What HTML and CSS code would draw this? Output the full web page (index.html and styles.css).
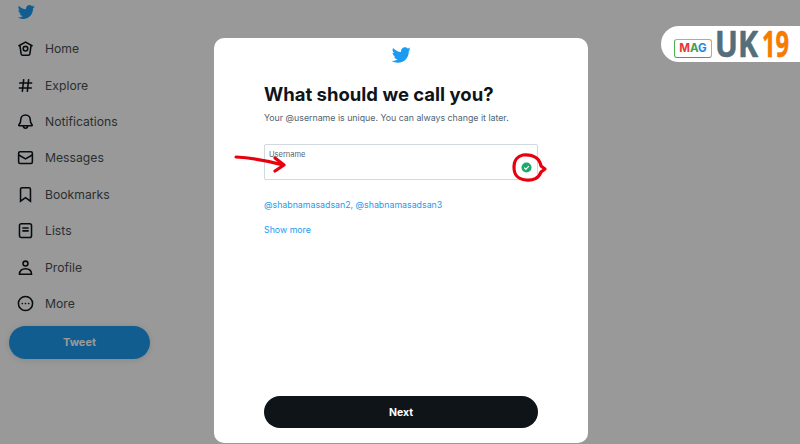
FILE: index.html
```html
<!DOCTYPE html>
<html lang="en">
<head>
    <meta charset="UTF-8">
    <title>What should we call you?</title>
    <link rel="stylesheet" href="styles.css">
</head>
<body>
<aside class="sidebar">
    <svg class="side-logo" viewBox="0 0 24 24"><path d="M23.643 4.937c-.835.37-1.732.62-2.675.733.962-.576 1.7-1.49 2.048-2.578-.9.534-1.897.922-2.958 1.13-.85-.904-2.06-1.47-3.4-1.47-2.572 0-4.658 2.086-4.658 4.66 0 .364.042.718.12 1.06-3.873-.195-7.304-2.05-9.602-4.868-.4.69-.63 1.49-.63 2.342 0 1.616.823 3.043 2.072 3.878-.764-.025-1.482-.234-2.11-.583v.06c0 2.257 1.605 4.14 3.737 4.568-.392.106-.803.162-1.227.162-.3 0-.593-.028-.877-.082.593 1.85 2.313 3.198 4.352 3.234-1.595 1.25-3.604 1.995-5.786 1.995-.376 0-.747-.022-1.112-.065 2.062 1.323 4.51 2.093 7.14 2.093 8.57 0 13.255-7.098 13.255-13.254 0-.2-.005-.402-.014-.602.91-.658 1.7-1.477 2.323-2.41z"/></svg>
    <nav class="menu">
        <a class="menu-item">
            <svg class="icon" viewBox="0 0 24 24"><path d="M2 8.500 12 3l10 5.500M4.200 8l1.600 11.500c.2 1.200 1 2 2.200 2h8c1.200 0 2-.8 2.200-2L19.800 8"/><circle cx="12" cy="12.200" r="3.200"/></svg>
            <span>Home</span>
        </a>
        <a class="menu-item">
            <svg class="icon" viewBox="0 0 24 24"><path d="M9.500 3 7.500 21M16.500 3l-2 18M3 8.500h18.500M2.500 15.500H21"/></svg>
            <span>Explore</span>
        </a>
        <a class="menu-item">
            <svg class="icon" viewBox="0 0 24 24"><path d="M12 2.800c-4 0-6.700 3-6.700 6.800 0 3.600-.6 5.400-2.600 7.200-.5.5-.2 1.200.5 1.200h17.600c.7 0 1-.7.5-1.200-2-1.800-2.600-3.600-2.600-7.200 0-3.800-2.700-6.800-6.700-6.800zM8.800 18.200c.2 2 1.500 3.300 3.200 3.300s3-1.300 3.200-3.300"/></svg>
            <span>Notifications</span>
        </a>
        <a class="menu-item">
            <svg class="icon" viewBox="0 0 24 24"><rect x="2.300" y="4" width="19.400" height="16.500" rx="2"/><path d="M2.500 8.500 12 14l9.500-5.500"/></svg>
            <span>Messages</span>
        </a>
        <a class="menu-item">
            <svg class="icon" viewBox="0 0 24 24"><path d="M5 4.500C5 3.200 5.900 2.500 7 2.500h10c1.100 0 2 .7 2 2v17L12 16.500l-7 5z"/></svg>
            <span>Bookmarks</span>
        </a>
        <a class="menu-item">
            <svg class="icon" viewBox="0 0 24 24"><rect x="3.500" y="2.500" width="17" height="19.500" rx="2.500"/><path d="M7.500 8.500h9M7.500 12.500h9"/></svg>
            <span>Lists</span>
        </a>
        <a class="menu-item">
            <svg class="icon" viewBox="0 0 24 24"><circle cx="12" cy="6.500" r="3.500"/><path d="M3.500 21.500c0-5 3.500-7.800 8.500-7.800s8.500 2.800 8.500 7.800z"/></svg>
            <span>Profile</span>
        </a>
        <a class="menu-item">
            <svg class="icon" viewBox="0 0 24 24"><circle cx="12" cy="12" r="10"/><circle class="solid" cx="7.500" cy="12" r="1.200"/><circle class="solid" cx="12" cy="12" r="1.200"/><circle class="solid" cx="16.500" cy="12" r="1.200"/></svg>
            <span>More</span>
        </a>
    </nav>
    <button class="tweet-btn">Tweet</button>
</aside>

<div class="backdrop">
    <div class="modal">
        <svg class="modal-logo" viewBox="0 0 24 24"><path d="M23.643 4.937c-.835.37-1.732.62-2.675.733.962-.576 1.7-1.49 2.048-2.578-.9.534-1.897.922-2.958 1.13-.85-.904-2.06-1.47-3.4-1.47-2.572 0-4.658 2.086-4.658 4.66 0 .364.042.718.12 1.06-3.873-.195-7.304-2.05-9.602-4.868-.4.69-.63 1.49-.63 2.342 0 1.616.823 3.043 2.072 3.878-.764-.025-1.482-.234-2.11-.583v.06c0 2.257 1.605 4.14 3.737 4.568-.392.106-.803.162-1.227.162-.3 0-.593-.028-.877-.082.593 1.85 2.313 3.198 4.352 3.234-1.595 1.25-3.604 1.995-5.786 1.995-.376 0-.747-.022-1.112-.065 2.062 1.323 4.51 2.093 7.14 2.093 8.57 0 13.255-7.098 13.255-13.254 0-.2-.005-.402-.014-.602.91-.658 1.7-1.477 2.323-2.41z"/></svg>
        <h1 class="title">What should we call you?</h1>
        <p class="subtitle">Your @username is unique. You can always change it later.</p>
        <div class="field">
            <label class="field-label">Username</label>
            <svg class="field-check" viewBox="0 0 12 12"><circle cx="6" cy="6" r="5.500"/><path d="M3.500 6.200 5.300 8l3.200-3.500"/></svg>
        </div>
        <a class="suggestions">@shabnamasadsan2, @shabnamasadsan3</a>
        <a class="show-more">Show more</a>
        <button class="next-btn">Next</button>
    </div>
</div>

<svg class="markup" viewBox="0 0 800 444">
    <path d="M236 157c16 1 32 4 47 8M275 158l9 7-9 6"/>
    <path d="M523 155c-5 1-9 5-9 12 0 8 3 12 12 13 7 1 13-2 15-8l4-3-4-3c-1-7-7-12-18-11"/>
</svg>

<div class="brand">
    <span class="brand-mag"><b class="red">M</b><b class="green">A</b><b class="blue">G</b></span>
    <svg class="brand-word" viewBox="0 0 82 36">
        <text class="brand-name" x="2" y="31" textLength="43" lengthAdjust="spacingAndGlyphs">UK</text>
        <text class="brand-num" x="49" y="31" textLength="27" lengthAdjust="spacingAndGlyphs">19</text>
    </svg>
</div>
</body>
</html>
```

FILE: styles.css
```css
* {
    margin: 0;
    padding: 0;
    box-sizing: border-box;
}

html, body {
    width: 100%;
    height: 100%;
    overflow: hidden;
}

body {
    background: #fff;
    color: #0f1419;
    font-family: Inter, "Liberation Sans", sans-serif;
}

.sidebar {
    width: 160px;
    padding: 3px 0 0 9px;
}

.side-logo {
    display: block;
    width: 18px;
    height: 18px;
    margin-left: 8px;
    fill: #1d9bf0;
}

.menu {
    margin-top: 9.500px;
}

.menu-item {
    display: flex;
    align-items: center;
    gap: 11px;
    height: 36.4px;
    padding-left: 8px;
    font-size: 12.200px;
    color: #4a4f54;
}

.icon {
    width: 17px;
    height: 17px;
    fill: none;
    stroke: #0f1419;
    stroke-width: 2.200;
}

.icon .solid {
    fill: #0f1419;
    stroke: none;
}

.tweet-btn {
    display: block;
    width: 141px;
    height: 33px;
    margin-top: 4px;
    padding-bottom: 1px;
    border: 0;
    border-radius: 17px;
    background: #1d9bf0;
    color: #fff;
    font: 700 11px Inter, "Liberation Sans", sans-serif;
    box-shadow: 0 1px 6px rgba(0, 0, 0, 0.12);
}

.backdrop {
    position: absolute;
    left: 0;
    top: 0;
    width: 100%;
    height: 100%;
    padding-top: 38px;
    background: rgba(0, 0, 0, 0.4);
    display: flex;
    justify-content: center;
}

.modal {
    width: 374px;
    height: 405px;
    margin-left: 2px;
    padding: 7px 50px 15px;
    background: #fff;
    border-radius: 10px;
    display: flex;
    flex-direction: column;
}

.modal-logo {
    width: 20px;
    height: 20px;
    flex: none;
    margin: 0 auto;
    fill: #1d9bf0;
}

.title {
    margin-top: 16px;
    font-size: 18.500px;
    line-height: 26px;
    font-weight: 700;
}

.subtitle {
    margin-top: 4px;
    font-size: 8.800px;
    line-height: 14px;
    color: #536471;
}

.field {
    height: 36px;
    margin-top: 19px;
    padding: 5px 4px;
    border: 1px solid #cfd9de;
    border-radius: 2px;
    display: flex;
    justify-content: space-between;
}

.field-label {
    font-size: 7.500px;
    line-height: 10px;
    color: #536471;
}

.field-check {
    width: 11px;
    height: 11px;
    margin: 12px 1px 0 0;
    fill: #17ab6e;
    stroke: none;
}

.field-check path {
    fill: none;
    stroke: #fff;
    stroke-width: 1.300;
}

.suggestions,
.show-more {
    font-size: 8.800px;
    line-height: 14px;
    color: #1d9bf0;
}

.suggestions {
    margin-top: 18px;
}

.show-more {
    margin-top: 10.500px;
}

.next-btn {
    height: 32px;
    margin-top: auto;
    border: 0;
    border-radius: 16px;
    background: #0f1419;
    color: #fff;
    font: 700 10.500px Inter, "Liberation Sans", sans-serif;
}

.markup {
    position: absolute;
    left: 0;
    top: 0;
    width: 800px;
    height: 444px;
    fill: none;
    stroke: #e8000d;
    stroke-width: 3.200;
    stroke-linecap: round;
    stroke-linejoin: round;
}

.brand {
    position: absolute;
    right: 0;
    top: 26px;
    width: 139px;
    height: 36px;
    padding-left: 13px;
    background: #fff;
    border-radius: 18px 0 0 18px;
    display: flex;
}

.brand-mag {
    width: 38px;
    height: 19px;
    margin-top: 13px;
    border: 1px solid #f0a030;
    border-left-color: #4caf50;
    border-bottom-color: #2196f3;
    border-radius: 3px;
    font-size: 11.500px;
    line-height: 17px;
    text-align: center;
}

.red { color: #e53935; }
.green { color: #43a047; }
.blue { color: #1e88e5; }

.brand-word {
    width: 82px;
    height: 36px;
    margin-left: 1px;
    flex: none;
    overflow: visible;
}

.brand-name,
.brand-num {
    font-family: "Open Sans", sans-serif;
    font-size: 36px;
    font-weight: 700;
    stroke-width: 0.600;
    stroke-linejoin: round;
}

.brand-name {
    fill: #546e7a;
    stroke: #546e7a;
}

.brand-num {
    fill: #f57c00;
    stroke: #f57c00;
}
```
